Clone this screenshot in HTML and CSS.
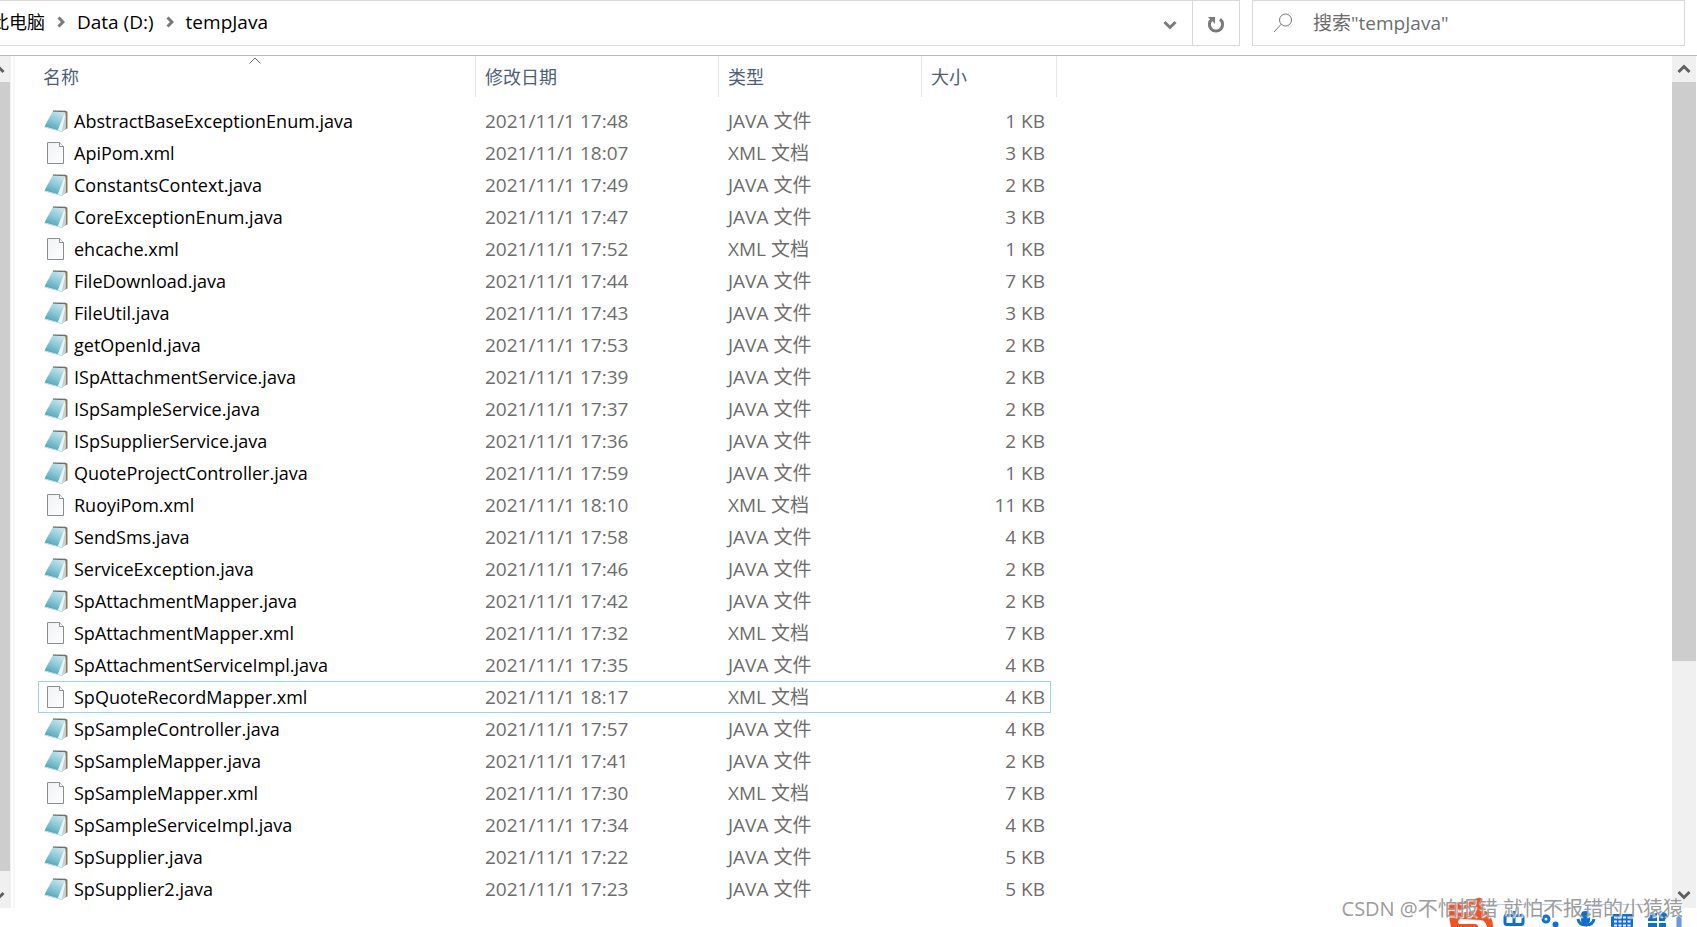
FILE: index.html
```html
<!DOCTYPE html>
<html lang="zh-CN">
<head>
<meta charset="utf-8">
<title>tempJava</title>
<link rel="stylesheet" href="styles.css">
</head>
<body>
<svg class="defs" aria-hidden="true">
  <defs>
    <linearGradient id="page" x1="0.8" y1="0" x2="0.3" y2="1">
      <stop offset="0" stop-color="#c9e6ec"/><stop offset="0.5" stop-color="#8ccad8"/><stop offset="1" stop-color="#45a3b8"/>
    </linearGradient>
    <linearGradient id="sheet" x1="0" y1="0" x2="1" y2="1">
      <stop offset="0" stop-color="#f1f3f4"/><stop offset="1" stop-color="#fdfefe"/>
    </linearGradient>
  </defs>
  <symbol id="java" viewBox="0 0 24 24">
    <path d="M21 2l2.500.5v17L20 21z" fill="#8f7a56"/>
    <path d="M8.500 2.500L21 3.500 14 21.500.5 17.500z" fill="url(#page)"/>
    <path d="M21.500 3.500L14 21l4 1.800 3.500-3.300z" fill="#eef4f6"/>
    <path d="M21.500 6L17.500 22.500l1 .3 3-3.300z" fill="#c3d3d8"/>
    <path d="M.5 18L14 21.500l4 1.300" fill="none" stroke="#b9d9e0"/>
    <path d="M9 2l13 .5" fill="none" stroke="#77706a" stroke-width="1.500"/>
    <path d="M9.500 1.500h11" fill="none" stroke="#c9c7c3" stroke-dasharray="1 1"/>
  </symbol>
  <symbol id="xml" viewBox="0 0 24 24">
    <path d="M3.500 1.500h12l4 4v17h-16z" fill="url(#sheet)" stroke="#8d8d8d"/>
    <path d="M15.500 1.500v4h4" fill="#fff" stroke="#8d8d8d"/>
  </symbol>
</svg>

<header class="toolbar">
  <div class="address">
    <nav class="crumbs" aria-label="地址">
      <button class="crumb root">此电脑</button>
      <svg class="sep" viewBox="0 0 8 12"><path d="M1.500 1.500L6 6l-4.500 4.500"/></svg>
      <button class="crumb">Data (D:)</button>
      <svg class="sep" viewBox="0 0 8 12"><path d="M1.500 1.500L6 6l-4.500 4.500"/></svg>
      <button class="crumb">tempJava</button>
    </nav>
    <button class="drop" aria-label="以前的位置"><svg viewBox="0 0 14 10"><path d="M1.500 2L7 7.500 12.500 2"/></svg></button>
    <button class="refresh" aria-label="刷新"><svg viewBox="0 0 18 18"><path d="M5 3.200A6.600 6.600 0 1 0 13 3.200"/><path class="tip" d="M1 1h7v7L5.700 5.600 3.300 3.600z"/></svg></button>
  </div>
  <label class="search">
    <svg viewBox="0 0 20 20"><circle cx="12.500" cy="7" r="6"/><path d="M8.200 11.300L1 19"/></svg>
    <input type="text" placeholder='搜索"tempJava"' aria-label="搜索">
  </label>
</header>

<main class="body">
  <div class="bar bar-left">
    <span class="arrow"><svg viewBox="0 0 14 10"><path d="M1.500 8L7 2.500 12.500 8"/></svg></span>
    <span class="thumb"></span>
    <span class="arrow"><svg viewBox="0 0 14 10"><path d="M1.500 2L7 7.500 12.500 2"/></svg></span>
  </div>
  <div class="files">
    <table>
      <colgroup><col class="c-name"><col class="c-date"><col class="c-type"><col class="c-size"></colgroup>
      <thead>
        <tr><th>名称<svg class="sort" viewBox="0 0 12 7"><path d="M.5 6.500L6 1l5.500 5.500"/></svg></th><th>修改日期</th><th>类型</th><th class="last">大小</th></tr>
      </thead>
      <tbody>
        <tr><td><svg><use href="#java"/></svg>AbstractBaseExceptionEnum.java</td><td>2021/11/1 17:48</td><td>JAVA 文件</td><td>1 KB</td></tr>
        <tr><td><svg><use href="#xml"/></svg>ApiPom.xml</td><td>2021/11/1 18:07</td><td>XML 文档</td><td>3 KB</td></tr>
        <tr><td><svg><use href="#java"/></svg>ConstantsContext.java</td><td>2021/11/1 17:49</td><td>JAVA 文件</td><td>2 KB</td></tr>
        <tr><td><svg><use href="#java"/></svg>CoreExceptionEnum.java</td><td>2021/11/1 17:47</td><td>JAVA 文件</td><td>3 KB</td></tr>
        <tr><td><svg><use href="#xml"/></svg>ehcache.xml</td><td>2021/11/1 17:52</td><td>XML 文档</td><td>1 KB</td></tr>
        <tr><td><svg><use href="#java"/></svg>FileDownload.java</td><td>2021/11/1 17:44</td><td>JAVA 文件</td><td>7 KB</td></tr>
        <tr><td><svg><use href="#java"/></svg>FileUtil.java</td><td>2021/11/1 17:43</td><td>JAVA 文件</td><td>3 KB</td></tr>
        <tr><td><svg><use href="#java"/></svg>getOpenId.java</td><td>2021/11/1 17:53</td><td>JAVA 文件</td><td>2 KB</td></tr>
        <tr><td><svg><use href="#java"/></svg>ISpAttachmentService.java</td><td>2021/11/1 17:39</td><td>JAVA 文件</td><td>2 KB</td></tr>
        <tr><td><svg><use href="#java"/></svg>ISpSampleService.java</td><td>2021/11/1 17:37</td><td>JAVA 文件</td><td>2 KB</td></tr>
        <tr><td><svg><use href="#java"/></svg>ISpSupplierService.java</td><td>2021/11/1 17:36</td><td>JAVA 文件</td><td>2 KB</td></tr>
        <tr><td><svg><use href="#java"/></svg>QuoteProjectController.java</td><td>2021/11/1 17:59</td><td>JAVA 文件</td><td>1 KB</td></tr>
        <tr><td><svg><use href="#xml"/></svg>RuoyiPom.xml</td><td>2021/11/1 18:10</td><td>XML 文档</td><td>11 KB</td></tr>
        <tr><td><svg><use href="#java"/></svg>SendSms.java</td><td>2021/11/1 17:58</td><td>JAVA 文件</td><td>4 KB</td></tr>
        <tr><td><svg><use href="#java"/></svg>ServiceException.java</td><td>2021/11/1 17:46</td><td>JAVA 文件</td><td>2 KB</td></tr>
        <tr><td><svg><use href="#java"/></svg>SpAttachmentMapper.java</td><td>2021/11/1 17:42</td><td>JAVA 文件</td><td>2 KB</td></tr>
        <tr><td><svg><use href="#xml"/></svg>SpAttachmentMapper.xml</td><td>2021/11/1 17:32</td><td>XML 文档</td><td>7 KB</td></tr>
        <tr><td><svg><use href="#java"/></svg>SpAttachmentServiceImpl.java</td><td>2021/11/1 17:35</td><td>JAVA 文件</td><td>4 KB</td></tr>
        <tr class="focused"><td><svg><use href="#xml"/></svg>SpQuoteRecordMapper.xml</td><td>2021/11/1 18:17</td><td>XML 文档</td><td>4 KB</td></tr>
        <tr><td><svg><use href="#java"/></svg>SpSampleController.java</td><td>2021/11/1 17:57</td><td>JAVA 文件</td><td>4 KB</td></tr>
        <tr><td><svg><use href="#java"/></svg>SpSampleMapper.java</td><td>2021/11/1 17:41</td><td>JAVA 文件</td><td>2 KB</td></tr>
        <tr><td><svg><use href="#xml"/></svg>SpSampleMapper.xml</td><td>2021/11/1 17:30</td><td>XML 文档</td><td>7 KB</td></tr>
        <tr><td><svg><use href="#java"/></svg>SpSampleServiceImpl.java</td><td>2021/11/1 17:34</td><td>JAVA 文件</td><td>4 KB</td></tr>
        <tr><td><svg><use href="#java"/></svg>SpSupplier.java</td><td>2021/11/1 17:22</td><td>JAVA 文件</td><td>5 KB</td></tr>
        <tr><td><svg><use href="#java"/></svg>SpSupplier2.java</td><td>2021/11/1 17:23</td><td>JAVA 文件</td><td>5 KB</td></tr>
      </tbody>
    </table>
  </div>
  <div class="bar bar-right">
    <span class="arrow"><svg viewBox="0 0 14 10"><path d="M1.500 8L7 2.500 12.500 8"/></svg></span>
    <span class="thumb"></span>
    <span class="arrow"><svg viewBox="0 0 14 10"><path d="M1.500 2L7 7.500 12.500 2"/></svg></span>
  </div>
</main>

<svg class="ime" viewBox="0 0 250 30" aria-hidden="true">
  <path d="M35 7.500H215" stroke="#b9d0f0" fill="none"/>
  <path d="M1 7Q18 5 32 1q4-1 5 4l2 8q8 6 8 17H41q-1-6-6-7l-20-1q-3 0-3 3 0 2 3 2h14q3 0 3 3H5Q3 20 1 7z" fill="#f4511e"/>
  <path d="M12 14q10 0 18-3" stroke="#fff" stroke-width="3" fill="none"/>
  <g fill="none" stroke="#0a6fd8" stroke-width="3">
    <rect x="59" y="18.500" width="18" height="9" rx="2"/><path d="M68 14v13"/>
    <circle cx="100" cy="22" r="3"/>
    <path d="M132 22q1 6 8 6t8-6"/>
  </g>
  <circle cx="109.500" cy="27.500" r="3" fill="#0a6fd8"/>
  <rect x="135" y="14" width="9" height="13" rx="4" fill="#0a6fd8"/>
  <rect x="165" y="17" width="22" height="13" rx="1" fill="#0a6fd8"/>
  <path d="M168 20.500h17M168 24.500h17M168 28.500h17" stroke="#fff" stroke-width="2" stroke-dasharray="3 1.500"/>
  <path d="M202 19q0-3 3-3h6v8h-9zM213 16h6v8h-6zM202 26h9v4h-9zM213 26h7v4h-7z" fill="#0a6fd8"/>
  <circle cx="217" cy="19" r="4" fill="#0a6fd8"/>
  <path d="M230.500 18.500h5v12h-5z" fill="#5b9bf0" stroke="#b8c4d4"/>
</svg>
<p class="watermark">CSDN @不怕报错 就怕不报错的小猿猿</p>
</body>
</html>
```

FILE: styles.css
```css
* { box-sizing: border-box; }

body {
  margin: 0;
  height: 100vh;
  padding-bottom: 19px;
  display: flex;
  flex-direction: column;
  overflow: hidden;
  position: relative;
  background: #fff;
  color: #000;
  font: 19px/24px "Open Sans", "Noto Sans CJK SC", sans-serif;
}

button {
  border: 0;
  padding: 0;
  background: none;
  font: inherit;
  color: inherit;
}

.defs { position: absolute; width: 0; height: 0; }

.toolbar {
  display: flex;
  gap: 12px;
  padding-right: 12px;
  margin-bottom: 9px;
  flex: none;
}

.address {
  flex: 1;
  display: flex;
  height: 46px;
  border: 1px solid #d9d9d9;
  border-left: 0;
}

.crumbs {
  flex: 1;
  display: flex;
  align-items: center;
  gap: 12px;
  margin-left: -9px;
  padding-bottom: 2px;
  white-space: nowrap;
}

.root { font-size: 18px; }

.sep { width: 8px; height: 12px; }

.sep path, .drop path, .refresh path {
  fill: none;
  stroke: #7a7a7a;
  stroke-width: 3;
}

.drop { width: 44px; }
.drop svg { width: 14px; height: 10px; }
.refresh { width: 47px; border-left: 1px solid #d9d9d9; }
.refresh svg { width: 18px; height: 18px; vertical-align: middle; }
.refresh .tip { fill: #7a7a7a; stroke: none; }

.search {
  width: 433px;
  height: 46px;
  display: flex;
  align-items: center;
  gap: 20px;
  padding: 0 20px;
  border: 1px solid #d9d9d9;
}

.search svg { width: 20px; height: 20px; flex: none; fill: none; stroke: #777; }

.search input {
  flex: 1;
  min-width: 0;
  border: 0;
  padding: 0;
  outline: 0;
  font: inherit;
}

.search input::placeholder { color: #6d6d6d; }

.body {
  flex: 1;
  min-height: 0;
  display: flex;
  border-top: 1px solid #b9b9b9;
  padding-right: 1px;
}

.bar {
  width: 24px;
  flex: none;
  display: flex;
  flex-direction: column;
  background: #f0f0f0;
}

.bar .arrow {
  height: 26px;
  display: flex;
  align-items: center;
  justify-content: center;
}

.bar svg { width: 14px; height: 10px; flex: none; }
.bar path { fill: none; stroke: #606060; stroke-width: 3; }
.thumb { background: #cdcdcd; }

.bar-right .thumb { height: 68%; }
.bar-right .arrow:last-child { margin-top: auto; }

.bar-left { width: 11px; overflow: hidden; }
.bar-left .arrow { height: 26px; justify-content: flex-end; padding-right: 6px; }
.bar-left .arrow:last-child { height: 37px; padding-top: 12px; }
.bar-left .thumb { flex: 1; margin-right: 1px; }

.files {
  flex: 1;
  margin-left: 2px;
  padding-left: 23px;
  border-left: 2px solid #f7f7f7;
}

table {
  table-layout: fixed;
  width: 1013px;
  border-collapse: separate;
  border-spacing: 0;
}

.c-name { width: 438px; }
.c-date { width: 243px; }
.c-type { width: 203px; }
.c-size { width: 129px; }

th {
  position: relative;
  height: 41px;
  padding: 0 0 0 9px;
  border-right: 1px solid #e5e5e5;
  color: #4c607a;
  font-size: 18px;
  font-weight: 400;
  text-align: left;
}

th:first-child { padding-left: 5px; }

th.last { border-right: 0; }

th.last::after {
  content: "";
  position: absolute;
  top: 0;
  bottom: 0;
  right: -6px;
  width: 1px;
  background: #e5e5e5;
}

.sort {
  position: absolute;
  top: 1px;
  left: 211px;
  width: 12px;
  height: 7px;
  fill: none;
  stroke: #666;
}

tbody::before { content: ""; display: block; height: 8px; }

td {
  height: 32px;
  padding: 0 0 0 9px;
  border: 1px solid transparent;
  border-width: 1px 0;
  color: #6d6d6d;
  line-height: 24px;
  white-space: nowrap;
}

td:first-child {
  border-left-width: 1px;
  padding-left: 5px;
  color: #000;
  font-size: 18px;
}

td:last-child {
  border-right-width: 1px;
  padding-right: 5px;
  text-align: right;
}

td svg {
  width: 24px;
  height: 24px;
  margin-right: 6px;
  vertical-align: top;
}

.focused td { border-color: #99d1ff; }

.ime {
  position: absolute;
  right: 1px;
  bottom: 0;
  width: 250px;
  height: 30px;
}

.watermark {
  position: absolute;
  right: 14px;
  bottom: 6px;
  margin: 0;
  color: #9c9c9c;
  text-shadow: 1px 1px 1px #fff;
  font-size: 20px;
}
```
